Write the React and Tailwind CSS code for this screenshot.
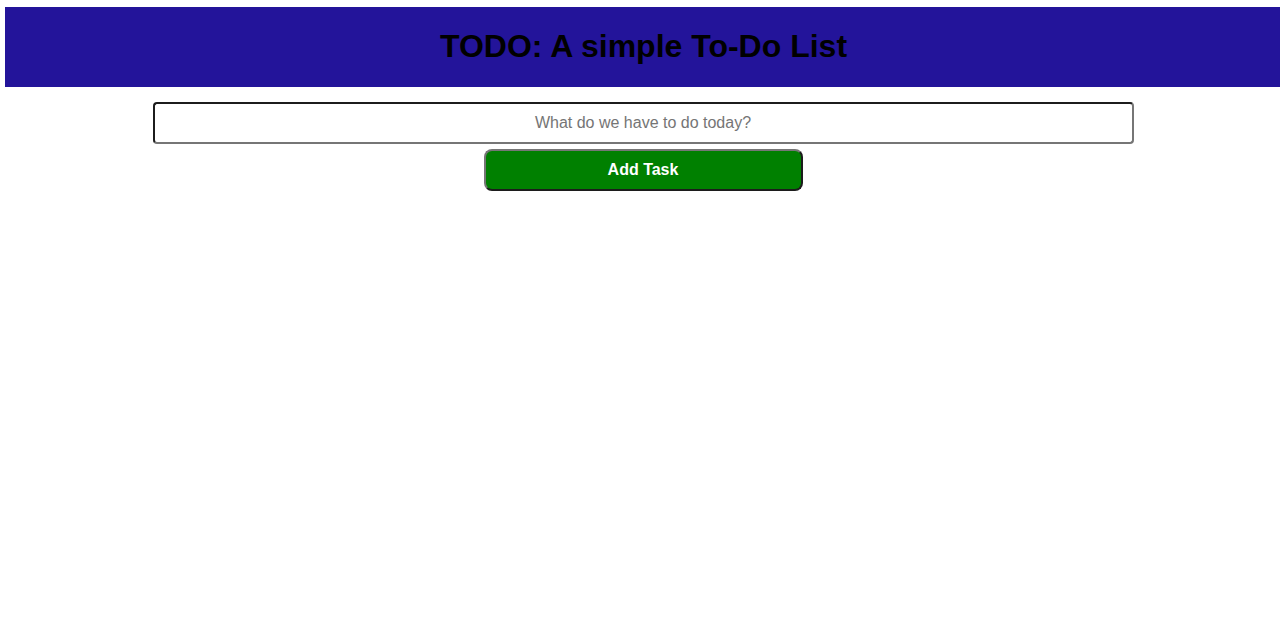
export default function App() {
  return (
    <div className="min-h-screen bg-white pt-[7px] pl-[5px] pr-[4px] font-['Liberation_Sans',Arial,sans-serif]">
      <header className="h-[80px] bg-[#23149a] flex items-center justify-center pb-[2px] pl-[2px]">
        <h1 className="text-[32px] font-bold text-black leading-none">TODO: A simple To-Do List</h1>
      </header>
      <div className="flex flex-col items-center mt-[15px] gap-[5px] pl-[1px]">
        <input
          type="text"
          placeholder="What do we have to do today?"
          className="w-[981px] h-[42px] rounded-[4px] border-2 border-t-[#1c1c1c] border-l-[#1c1c1c] border-b-[#767676] border-r-[#767676] text-center text-base text-black placeholder:text-[#757575] outline-none"
        />
        <button className="w-[319px] h-[42px] rounded-[8px] border-2 border-t-[#767676] border-l-[#767676] border-b-[#1c1c1c] border-r-[#1c1c1c] bg-[#008000] text-white font-bold text-base">
          Add Task
        </button>
      </div>
    </div>
  )
}
